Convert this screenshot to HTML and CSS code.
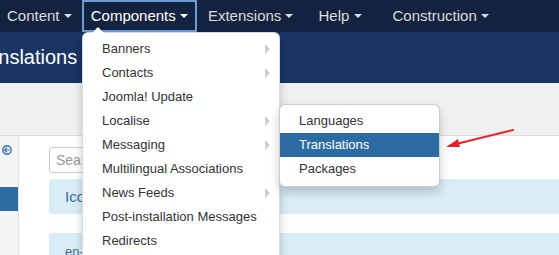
FILE: index.html
```html
<!DOCTYPE html>
<html>
<head>
<meta charset="utf-8">
<link rel="stylesheet" href="styles.css">
</head>
<body>
<div class="page">
  <nav class="navbar">
    <ul class="nav">
      <li class="nav-item first">Content <span class="caret"></span></li>
      <li class="nav-item active">Components <span class="caret"></span></li>
      <li class="nav-item ext">Extensions <span class="caret"></span></li>
      <li class="nav-item help">Help <span class="caret"></span></li>
      <li class="nav-item constr">Construction <span class="caret"></span></li>
    </ul>
  </nav>
  <header class="header"><h1 class="title">Translations</h1></header>
  <div class="subhead"></div>
  <div class="body">
    <aside class="sidebar">
      <div class="side-icon">
        <svg width="10" height="10" viewBox="0 0 10 10"><circle cx="5" cy="5" r="4.2" fill="none" stroke="#3071a9" stroke-width="1.4"/><path d="M2.2 5h5.6M5 2.6 2.6 5 5 7.4" fill="none" stroke="#3071a9" stroke-width="1.2"/></svg>
      </div>
      <div class="side-active"></div>
    </aside>
    <main class="main">
      <div class="search"><span class="placeholder">Search</span></div>
      <div class="row info"><span class="row-text">Icon</span></div>
      <div class="row info second"><span class="row-text small">en-GB</span></div>
    </main>
  </div>

  <div class="dropdown">
    <ul class="menu">
      <li class="sub">Banners</li>
      <li class="sub">Contacts</li>
      <li>Joomla! Update</li>
      <li class="sub">Localise</li>
      <li class="sub">Messaging</li>
      <li>Multilingual Associations</li>
      <li class="sub">News Feeds</li>
      <li>Post-installation Messages</li>
      <li>Redirects</li>
    </ul>
  </div>
  <div class="submenu">
    <ul class="menu">
      <li>Languages</li>
      <li class="hl">Translations</li>
      <li>Packages</li>
    </ul>
  </div>
  <svg class="red-arrow" width="80" height="30" viewBox="0 0 80 30">
    <path d="M69 4 L12 18" stroke="#e8202a" stroke-width="2" fill="none" stroke-linecap="round"/>
    <path d="M2 21 L14 13 L16 21 Z" fill="#e8202a"/>
  </svg>
</div>
</body>
</html>
```
FILE: styles.css
```css
* { box-sizing: border-box; }
html, body { margin: 0; padding: 0; }
body {
  font-family: "Liberation Sans", Arial, sans-serif;
  background: #ffffff;
  width: 559px;
  height: 255px;
  overflow: hidden;
}
.page { position: relative; width: 559px; height: 255px; overflow: hidden; }

.navbar {
  height: 32px;
  background: #13223f;
}
.nav {
  list-style: none;
  margin: 0 0 0 -2px;
  padding: 0;
  display: flex;
  height: 32px;
}
.nav-item {
  color: #dcdcdc;
  font-size: 15px;
  line-height: 28px;
  padding: 0 7px;
  border: 2px solid transparent;
  height: 32px;
  white-space: nowrap;
}
.nav-item.active {
  margin-left: 1px;
  border: 2px solid #6f9bd1;
  color: #ffffff;
  background: #13223f;
}
.nav-item.ext { margin-left: 2px; }
.nav-item.help { margin-left: 7px; }
.nav-item.constr { margin-left: 13px; }
.caret {
  display: inline-block;
  width: 0; height: 0;
  border-left: 4px solid transparent;
  border-right: 4px solid transparent;
  border-top: 4px solid currentColor;
  vertical-align: middle;
  margin-top: -2px;
}

.header {
  height: 51px;
  background: #183563;
  overflow: hidden;
}
.title {
  margin: 0 0 0 -31px;
  font-weight: normal;
  color: #ffffff;
  font-size: 20px;
  line-height: 51px;
  white-space: nowrap;
}

.subhead {
  height: 53px;
  background: #f0f0f0;
  border-bottom: 1px solid #dcdcdc;
}

.body { display: flex; height: 120px; }
.sidebar {
  width: 19px;
  background: #f5f5f5;
  border-right: 1px solid #e3e3e3;
  padding-top: 9px;
}
.side-icon { padding-left: 2px; height: 10px; }
.side-icon svg { display: block; }
.side-active {
  margin-top: 32px;
  height: 24px;
  background: #2d6ca2;
}
.main { flex: 1; padding: 11px 0 0 30px; }
.search {
  width: 80px;
  height: 26px;
  border: 1px solid #cccccc;
  border-radius: 3px;
  padding: 0 6px;
  font-size: 14px;
  line-height: 24px;
  color: #999999;
}
.row {
  margin-top: 6px;
  height: 35px;
  background: #d9edf7;
  border-radius: 3px 0 0 3px;
  padding-left: 16px;
  font-size: 15px;
  line-height: 35px;
  color: #3a6f95;
}
.row.second { margin-top: 19px; }
.row-text.small { font-size: 13px; line-height: 36px; }

.dropdown {
  position: absolute;
  left: 82px;
  top: 32px;
  width: 198px;
  height: 240px;
  background: #ffffff;
  border: 1px solid rgba(0,0,0,0.15);
  border-radius: 6px;
  box-shadow: 0 5px 10px rgba(0,0,0,0.2);
  padding: 4px 0;
}
.dropdown::before {
  content: "";
  position: absolute;
  left: 9px;
  top: -6px;
  border-left: 6px solid transparent;
  border-right: 6px solid transparent;
  border-bottom: 6px solid #ffffff;
}
.menu { list-style: none; margin: 0; padding: 0; }
.menu li {
  position: relative;
  padding: 3px 19px;
  font-size: 13px;
  line-height: 18px;
  color: #333333;
  white-space: nowrap;
}
.menu li.sub::after {
  content: "";
  position: absolute;
  right: 9px;
  top: 7px;
  border-top: 5px solid transparent;
  border-bottom: 5px solid transparent;
  border-left: 5px solid #cccccc;
}
.submenu {
  position: absolute;
  left: 279px;
  top: 104px;
  width: 161px;
  height: 83px;
  background: #ffffff;
  border: 1px solid rgba(0,0,0,0.2);
  border-radius: 6px;
  box-shadow: 0 5px 10px rgba(0,0,0,0.2);
  padding: 4px 0;
}
.submenu .menu li.hl {
  background: #2d6ca2;
  color: #ffffff;
}
.red-arrow {
  position: absolute;
  left: 444px;
  top: 126px;
}
```
